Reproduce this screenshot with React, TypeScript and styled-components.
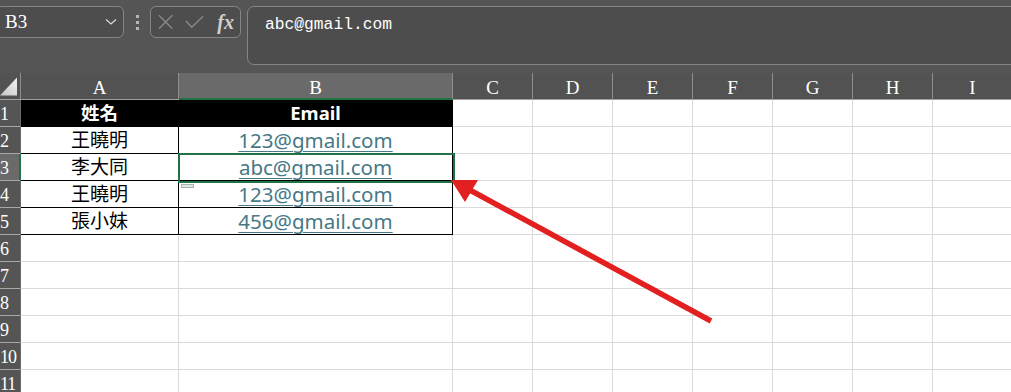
import { FC } from 'react';
import styled, { createGlobalStyle } from 'styled-components';

const GlobalStyle = createGlobalStyle`
  html, body {
    margin: 0;
    padding: 0;
    background: #ffffff;
  }
`;

const GREEN = '#217346';

const Page = styled.div`
  position: relative;
  width: 1011px;
  height: 392px;
  overflow: hidden;
  background: #ffffff;
`;

const FormulaBar = styled.div`
  display: flex;
  align-items: flex-start;
  height: 73px;
  box-sizing: border-box;
  padding-top: 6px;
  background: #555555;
`;

const NameBox = styled.div`
  display: flex;
  align-items: center;
  justify-content: space-between;
  width: 128px;
  height: 32px;
  margin-left: -4px;
  box-sizing: border-box;
  padding: 0 6px 0 8px;
  border: 1px solid #858585;
  border-radius: 6px;
  background: #4d4d4d;
  color: #ffffff;
  font-family: "Liberation Serif", serif;
  font-size: 19px;
`;

const Dots = styled.div`
  display: flex;
  flex-direction: column;
  align-items: center;
  justify-content: center;
  gap: 3px;
  width: 26px;
  height: 32px;

  span {
    width: 3px;
    height: 3px;
    background: #b5b5b5;
  }
`;

const FxBox = styled.div`
  display: flex;
  align-items: center;
  width: 91px;
  height: 32px;
  box-sizing: border-box;
  padding: 0 6px 0 7px;
  gap: 12px;
  border: 1px solid #858585;
  border-radius: 6px;
  background: #4d4d4d;
`;

const FxLabel = styled.span`
  color: #d0d0d0;
  font-family: "Liberation Serif", serif;
  font-style: italic;
  font-weight: bold;
  font-size: 20px;
  margin-left: 1px;
`;

const FormulaInput = styled.div`
  flex: 1;
  height: 59px;
  margin: 0 -12px 0 6px;
  box-sizing: border-box;
  padding: 8px 0 0 17px;
  border: 1px solid #858585;
  border-radius: 7px;
  background: #4d4d4d;
  color: #ffffff;
  font-family: "Liberation Mono", monospace;
  font-size: 16.3px;
`;

const Sheet = styled.div`
  display: grid;
  grid-template-columns: 21px 158px 274px repeat(7, 80px);
  grid-auto-rows: 27px;
`;

const Corner = styled.div`
  display: flex;
  align-items: flex-end;
  justify-content: flex-end;
  box-sizing: border-box;
  padding: 0 3px 3px 0;
  background: #525252;
  border-right: 1px solid #8e8e8e;
  border-bottom: 1px solid #a0a0a0;
`;

const ColHead = styled.div<{ $sel?: boolean }>`
  display: flex;
  align-items: center;
  justify-content: center;
  box-sizing: border-box;
  padding-top: 4px;
  background: ${({ $sel }) => ($sel ? '#6a6a6a' : '#525252')};
  border-right: 1px solid #8e8e8e;
  border-bottom: ${({ $sel }) => ($sel ? `2px solid ${GREEN}` : '1px solid #a0a0a0')};
  color: #ffffff;
  font-family: "Liberation Serif", serif;
  font-size: 19px;
`;

const RowHead = styled.div<{ $sel?: boolean }>`
  display: flex;
  align-items: center;
  justify-content: flex-start;
  box-sizing: border-box;
  padding: 2px 0 0 0;
  background: ${({ $sel }) => ($sel ? '#6a6a6a' : '#555555')};
  border-right: ${({ $sel }) => ($sel ? `2px solid ${GREEN}` : '1px solid #6a6a6a')};
  border-bottom: 1px solid #a8a8a8;
  color: #ffffff;
  font-family: "Liberation Serif", serif;
  font-size: 18px;
  letter-spacing: -1px;
  white-space: nowrap;
`;

const Cell = styled.div<{ $tbl?: boolean; $head?: boolean; $link?: boolean }>`
  position: relative;
  display: flex;
  align-items: center;
  justify-content: center;
  box-sizing: border-box;
  background: ${({ $head }) => ($head ? '#000000' : '#ffffff')};
  border-right: 1px solid ${({ $tbl }) => ($tbl ? '#000000' : '#dadada')};
  border-bottom: 1px solid ${({ $tbl }) => ($tbl ? '#000000' : '#dadada')};
  color: ${({ $head, $link }) => ($head ? '#ffffff' : $link ? '#467886' : '#000000')};
  font-family: ${({ $link }) =>
    $link ? '"Noto Sans", sans-serif' : '"Noto Sans", "Noto Sans CJK TC", sans-serif'};
  font-size: ${({ $link, $head }) => ($link ? '20.5px' : $head ? '18.5px' : '19px')};
  font-weight: ${({ $head }) => ($head ? 700 : 400)};
  text-decoration: ${({ $link }) => ($link ? 'underline' : 'none')};
  text-decoration-thickness: 1px;
  text-underline-offset: 3px;
  line-height: 1;
  white-space: nowrap;
`;

const Selection = styled.div`
  position: absolute;
  z-index: 2;
  top: -1px;
  left: -1px;
  width: 277px;
  height: 30px;
  box-sizing: border-box;
  border: 2px solid ${GREEN};
  pointer-events: none;
`;

const QuickBadge = styled.div`
  position: absolute;
  top: 29px;
  left: 1px;
  width: 13px;
  height: 4px;
  box-sizing: border-box;
  border: 1px solid #9fb9a8;
  background: #e4e4e4;
`;

const Overlay = styled.svg`
  position: absolute;
  z-index: 3;
  top: 0;
  left: 0;
  pointer-events: none;
`;

const columns = ['A', 'B', 'C', 'D', 'E', 'F', 'G', 'H', 'I'];

const people = [
  { name: '姓名', email: 'Email' },
  { name: '王曉明', email: '123@gmail.com' },
  { name: '李大同', email: 'abc@gmail.com' },
  { name: '王曉明', email: '123@gmail.com' },
  { name: '張小妹', email: '456@gmail.com' },
];

const TOTAL_ROWS = 11;

const Chevron: FC = () => (
  <svg width="12" height="8" viewBox="0 0 12 8">
    <path d="M1 1.5 L6 6 L11 1.5" fill="none" stroke="#d8d8d8" strokeWidth="1.3" />
  </svg>
);

const CancelIcon: FC = () => (
  <svg width="16" height="16" viewBox="0 0 16 16">
    <path d="M1 1 L15 15 M15 1 L1 15" stroke="#8a8a8a" strokeWidth="1.4" />
  </svg>
);

const EnterIcon: FC = () => (
  <svg width="20" height="14" viewBox="0 0 20 14">
    <path d="M1 6 L7 12.5 L19 1" fill="none" stroke="#8a8a8a" strokeWidth="1.4" />
  </svg>
);

const CornerTriangle: FC = () => (
  <svg width="18" height="19" viewBox="0 0 18 19">
    <defs>
      <linearGradient id="tri" x1="0" y1="1" x2="1" y2="0">
        <stop offset="0" stopColor="#c8c8c8" />
        <stop offset="1" stopColor="#f0f0f0" />
      </linearGradient>
    </defs>
    <polygon points="0,19 18,19 18,0" fill="url(#tri)" />
  </svg>
);

const App: FC = () => {
  const rows = Array.from({ length: TOTAL_ROWS }, (_, i) => i + 1);

  return (
    <>
      <GlobalStyle />
      <Page>
        <FormulaBar>
          <NameBox>
            <span>B3</span>
            <Chevron />
          </NameBox>
          <Dots>
            <span />
            <span />
            <span />
          </Dots>
          <FxBox>
            <CancelIcon />
            <EnterIcon />
            <FxLabel>fx</FxLabel>
          </FxBox>
          <FormulaInput>abc@gmail.com</FormulaInput>
        </FormulaBar>

        <Sheet>
          <Corner>
            <CornerTriangle />
          </Corner>
          {columns.map((c) => (
            <ColHead key={c} $sel={c === 'B'}>{c}</ColHead>
          ))}

          {rows.map((r) => {
            const person = people[r - 1];
            return [
              <RowHead key={`h${r}`} $sel={r === 3}>{r}</RowHead>,
              ...columns.map((c) => {
                const inTable = !!person && (c === 'A' || c === 'B');
                const head = inTable && r === 1;
                let text = '';
                if (inTable) text = c === 'A' ? person.name : person.email;
                return (
                  <Cell
                    key={`${c}${r}`}
                    $tbl={inTable}
                    $head={head}
                    $link={inTable && !head && c === 'B'}
                  >
                    {text}
                    {c === 'B' && r === 3 && (
                      <Selection>
                        <QuickBadge />
                      </Selection>
                    )}
                  </Cell>
                );
              }),
            ];
          })}
        </Sheet>

        <Overlay width="1011" height="392" viewBox="0 0 1011 392">
          <line x1="711" y1="321" x2="468" y2="189" stroke="#e2201f" strokeWidth="5.5" />
          <polygon points="451,180 478,180 465,202" fill="#e2201f" />
        </Overlay>
      </Page>
    </>
  );
};

export default App;
